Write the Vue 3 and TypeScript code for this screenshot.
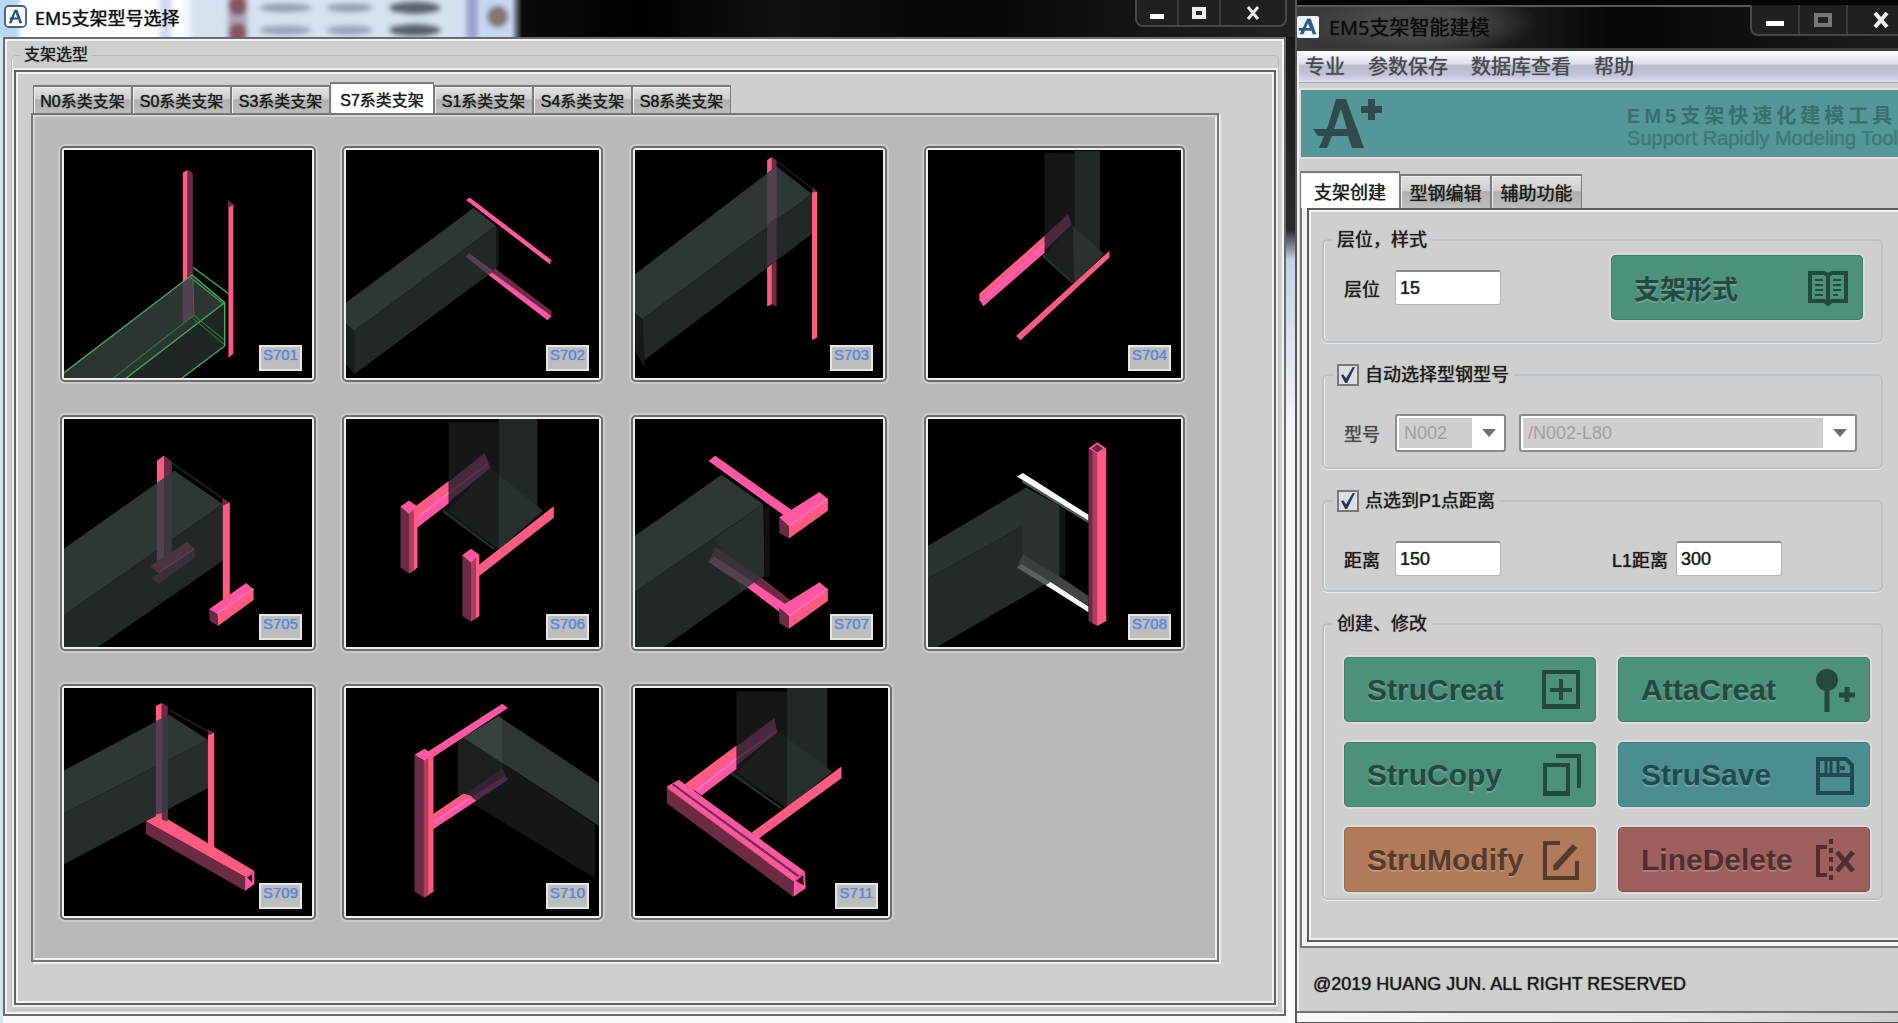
<script setup lang="ts">
import { ref } from 'vue'

type Face = [points: string, fill: string]
type Line = [points: string, stroke: string, width: number]

interface Scene {
  id: string
  box: string
  wide: boolean
  faces: Face[]
  lines?: Line[]
}

const P = '#ff5a80'
const M = '#ff58a0'
const R = '#b03d60'
const D = '#6b2b45'
const TOP = '#2f3735'
const SIDE = '#222827'
const DIM = '#141716'
const GHOST = '#54404f'

const scenes: Scene[] = [
  {
    id: 'S701', box: '67 58 668 683', wide: false,
    faces: [
      ['387,126 400,117 400,455 387,455', P], ['400,117 414,127 414,430 400,450', D],
      ['67,725 412,432 500,515 235,741 67,741', '#2d3533'],
      ['235,741 500,515 500,645 385,741', '#1f2524'],
      ['387,455 414,432 414,560 387,578', GHOST],
      ['510,218 523,222 523,668 510,680', P], ['508,206 523,222 510,230', D]
    ],
    lines: [
      ['67,725 412,432 500,515 235,741', '#45a852', 4], ['415,410 510,488', '#45a852', 4],
      ['408,440 500,522', '#45a852', 3], ['414,440 417,553 500,628', '#31783b', 3],
      ['417,553 200,741', '#31783b', 3], ['417,565 500,642', '#31783b', 3],
      ['500,515 500,645 385,741', '#45a852', 4]
    ]
  },
  {
    id: 'S702', box: '828 58 683 683', wide: true,
    faces: [
      ['828,515 1172,232 1233,285 850,600 828,580', TOP],
      ['850,600 1233,285 1233,415 850,730', SIDE], ['828,580 850,600 850,730 828,700', '#181c1b'],
      ['1233,290 1241,290 1241,405 1233,415', DIM],
      ['1152,378 1160,366 1225,420 1212,432', GHOST],
      ['1230,412 1383,540 1383,555 1222,424', D],
      ['1212,432 1222,424 1383,555 1372,568', M],
      ['1152,208 1162,200 1383,388 1378,400', M], ['1378,392 1383,388 1383,404', D]
    ]
  },
  {
    id: 'S703', box: '62 58 625 683', wide: false,
    faces: [
      ['395,88 407,79 407,520 395,527', P], ['407,79 419,90 419,527 407,520', D],
      ['62,430 418,107 508,190 80,565 62,548', TOP],
      ['80,565 508,190 508,310 85,688', SIDE], ['62,548 80,565 88,712 62,660', '#161a19'],
      ['395,132 419,108 419,260 395,283', GHOST], ['395,283 419,260 419,388 395,408', '#403542'],
      ['508,180 521,182 521,620 508,628', P], ['510,168 521,182 508,186', D]
    ],
    lines: [['419,92 512,176', '#242424', 3]]
  },
  {
    id: 'S704', box: '802 58 640 683', wide: true,
    faces: [
      ['1097,68 1172,68 1172,455 1092,372 1097,366', DIM], ['1172,60 1237,60 1237,370 1172,455', '#222827'],
      ['1097,375 1165,280 1172,290 1172,458', '#1b201f'], ['1168,284 1248,370 1172,458', '#2a312f'],
      ['1097,315 1156,250 1165,282 1097,360', '#49293b'],
      ['932,488 1097,315 1097,340 932,512', P], ['932,506 1097,335 1097,366 942,526', M],
      ['1025,615 1261,360 1261,380 1036,628', P]
    ],
    lines: [['936,512 1097,345', '#ff7bb8', 2], ['1092,374 1168,456', '#25312e', 6]]
  },
  {
    id: 'S705', box: '68 50 667 683', wide: false,
    faces: [
      ['318,175 337,159 337,245 318,245', P], ['337,159 358,178 358,245 337,245', D],
      ['68,438 365,205 495,305 68,638', TOP],
      ['68,638 495,305 495,475 160,733 68,733', SIDE],
      ['318,242 337,227 337,480 318,490', GHOST], ['337,227 358,212 358,480 337,480', '#3d3740'],
      ['300,490 400,418 420,440 322,512', '#49343f'], ['322,512 420,440 420,465 322,545 302,525', '#39303a'],
      ['458,620 558,541 578,560 480,634', M], ['480,634 578,560 578,592 482,670', P],
      ['458,620 480,634 482,670 460,655', D],
      ['495,300 514,300 514,592 495,608', P], ['493,286 514,300 495,310', D]
    ],
    lines: [['358,182 492,285', '#171a19', 8], ['480,633 578,559', '#ff7bea', 3], ['322,511 418,440', '#66566a', 2]]
  },
  {
    id: 'S706', box: '828 50 683 683', wide: true,
    faces: [
      ['1105,60 1240,60 1240,442 1090,325 1105,312', DIM], ['1240,50 1345,50 1345,320 1240,442', '#222827'],
      ['1105,325 1215,192 1240,215 1240,442', '#1a1f1e'], ['1240,215 1360,325 1240,442', '#28302e'],
      ['1105,238 1202,152 1218,196 1105,300', '#48293b'],
      ['1015,312 1105,236 1105,272 1015,350', P], ['1018,345 1105,268 1105,303 1020,376', M],
      ['975,312 998,328 998,513 975,495', D], ['998,328 1010,322 1010,505 998,513', R],
      ['1010,320 1021,312 1021,495 1010,505', P], ['975,312 998,294 1021,312 998,334', M],
      ['1185,488 1389,311 1389,346 1188,520', P],
      ['1142,458 1165,474 1165,657 1142,640', D], ['1165,474 1178,466 1178,648 1165,657', R],
      ['1178,464 1188,457 1188,640 1178,648', P], ['1142,458 1165,439 1188,457 1165,480', M]
    ],
    lines: [['1025,342 1105,272', '#ff7bea', 3], ['1105,272 1210,185', '#5d3852', 3], ['1090,326 1230,441', '#25312e', 6]]
  },
  {
    id: 'S707', box: '62 50 625 683', wide: false,
    faces: [
      ['62,400 280,217 385,305 62,568', TOP], ['62,568 385,305 388,520 135,733 62,733', SIDE],
      ['265,408 385,305 388,520 330,565', '#28302e'], ['388,308 402,315 402,520 388,525', '#0f1211'],
      ['247,478 265,433 385,530 345,555', '#3b3239'], ['247,478 262,462 362,540 345,555', GHOST],
      ['362,540 382,526 457,596 440,612', D], ['345,555 362,540 440,604 428,630', M],
      ['247,176 264,160 460,325 442,343', M],
      ['425,345 527,269 548,290 450,372', M], ['450,372 548,290 548,325 450,408', P], ['425,345 450,372 450,408 426,392', D],
      ['425,615 527,539 548,560 450,642', M], ['450,642 548,560 548,595 450,678', P], ['425,615 450,642 450,678 426,662', D]
    ],
    lines: [['450,371 548,289', '#ff7bea', 3], ['450,641 548,559', '#ff7bea', 3]]
  },
  {
    id: 'S708', box: '802 50 640 683', wide: true,
    faces: [
      ['802,430 1050,255 1135,310 802,528', '#2b3331'], ['802,528 1135,310 1135,520 825,733 802,733', '#242a29'],
      ['1040,262 1135,312 1135,520 1040,470', '#2b3230'], ['1135,312 1150,320 1150,520 1135,520', '#111413'],
      ['1027,495 1042,456 1135,522 1100,548', '#3a403f'], ['1027,495 1040,485 1112,538 1100,548', '#59605f'],
      ['1112,538 1135,522 1208,580 1208,610', '#434343'], ['1100,548 1112,538 1208,612 1208,629', '#f8f8f8'],
      ['1040,232 1208,352 1208,362 1040,240', '#555'],
      ['1027,222 1042,212 1208,337 1208,354', '#f8f8f8'],
      ['1208,138 1230,152 1230,670 1208,655', D], ['1218,146 1232,152 1232,670 1218,662', R],
      ['1230,152 1253,138 1253,655 1230,670', P], ['1208,138 1230,120 1253,138 1230,153', M],
      ['1216,138 1230,126 1245,138 1230,150', D]
    ]
  },
  {
    id: 'S709', box: '68 50 667 683', wide: false,
    faces: [
      ['315,104 331,95 331,450 315,450', P], ['331,95 347,105 347,450 331,450', D],
      ['68,297 350,130 455,205 68,425', TOP], ['68,425 455,205 455,350 68,578', '#262d2c'],
      ['315,150 333,140 333,425 315,435', GHOST], ['333,140 347,132 347,415 333,425', '#3c383f'],
      ['288,449 325,428 580,598 555,616', P], ['288,449 555,616 555,657 288,487', D],
      ['555,616 580,598 580,637 555,657', M], ['560,618 574,608 574,632', '#2a0d18'],
      ['315,430 331,425 331,447 315,452', P], ['331,425 347,412 347,450 331,445', D],
      ['455,188 472,184 472,530 455,543', P], ['455,175 472,184 455,192', D]
    ],
    lines: [['350,115 455,180', '#171a19', 6]]
  },
  {
    id: 'S710', box: '828 50 683 683', wide: true,
    faces: [
      ['1130,205 1145,198 1500,458 1500,620 1130,370', DIM],
      ['1130,205 1145,198 1250,275 1250,310 1150,375 1130,370', '#1b201e'],
      ['1145,198 1240,135 1510,333 1510,463', TOP], ['1145,198 1240,135 1250,142 1250,275', '#37413e'],
      ['1150,370 1250,290 1265,325 1178,389', '#36212f'], ['1165,378 1255,314 1265,325 1178,389', '#4b2b46'],
      ['1062,428 1145,366 1168,374 1062,455', P], ['1062,450 1165,374 1180,388 1062,474', M],
      ['1050,240 1250,97 1265,110 1060,260', M],
      ['1013,250 1040,268 1040,678 1013,660', D], ['1038,268 1052,258 1052,670 1038,678', R],
      ['1050,260 1064,250 1064,660 1050,670', P], ['1013,250 1040,232 1064,250 1040,268', M]
    ],
    lines: [['1065,452 1160,382', '#ff7bea', 3]]
  },
  {
    id: 'S711', box: '54 50 566 683', wide: true,
    faces: [
      ['281,60 394,60 394,410 270,305 281,292', DIM], ['394,50 484,50 484,295 394,410', '#222827'],
      ['281,300 375,182 394,200 394,410', '#1a1f1e'], ['394,200 495,300 394,408', '#28302e'],
      ['281,225 366,140 372,185 281,282', '#48293b'],
      ['165,338 281,222 281,258 185,358', P], ['185,355 281,255 281,293 203,372', M],
      ['315,483 516,285 516,320 330,502', P],
      ['125,345 152,325 434,600 410,628', M], ['125,345 410,628 408,675 125,395', D],
      ['410,628 434,600 436,650 408,675', M], ['414,628 430,610 432,642', '#3a1222']
    ],
    lines: [
      ['192,355 281,262', '#ff7bea', 3], ['281,262 372,178', '#5d3852', 3],
      ['138,338 420,614', '#7d2b50', 6], ['127,348 410,628', P, 4], ['270,306 383,412', '#25312e', 6]
    ]
  }
]

const seriesTabs = ['N0系类支架', 'S0系类支架', 'S3系类支架', 'S7系类支架', 'S1系类支架', 'S4系类支架', 'S8系类支架']
const activeSeries = ref('S7系类支架')

const menu = ['专业', '参数保存', '数据库查看', '帮助']
const toolTabs = ['支架创建', '型钢编辑', '辅助功能']
const activeTool = ref('支架创建')

const level = ref('15')
const autoPick = ref(true)
const toPoint = ref(true)
const distance = ref('150')
const l1 = ref('300')

const actions = [
  { name: 'StruCreat', tone: 'green', icon: 'create' },
  { name: 'AttaCreat', tone: 'green', icon: 'attach' },
  { name: 'StruCopy', tone: 'green', icon: 'copy' },
  { name: 'StruSave', tone: 'blue', icon: 'save' },
  { name: 'StruModify', tone: 'orange', icon: 'modify' },
  { name: 'LineDelete', tone: 'red', icon: 'delete' }
]
</script>

<template>
  <div class="desktop">
    <section class="window picker">
      <header class="titlebar">
        <svg class="backdrop" viewBox="0 0 530 38" aria-hidden="true">
          <defs>
            <filter id="soft" x="-20%" y="-20%" width="140%" height="140%"><feGaussianBlur stdDeviation="3" /></filter>
          </defs>
          <g filter="url(#soft)">
            <rect x="-10" y="-10" width="28" height="60" fill="#b9d6f6" />
            <rect x="162" y="-10" width="12" height="60" fill="#d3d8f4" />
            <rect x="195" y="-10" width="270" height="60" fill="#d5e2ef" />
            <rect x="232" y="-10" width="20" height="60" fill="#aaa4b8" />
            <circle cx="242" cy="6" r="10" fill="#845660" /><circle cx="242" cy="34" r="10" fill="#845660" />
            <ellipse cx="291" cy="8" rx="27" ry="5" fill="#98a2b5" /><ellipse cx="291" cy="31" rx="27" ry="5" fill="#98a2b5" />
            <ellipse cx="357" cy="8" rx="24" ry="5" fill="#98a2b5" /><ellipse cx="357" cy="31" rx="24" ry="5" fill="#98a2b5" />
            <ellipse cx="424" cy="8" rx="27" ry="7" fill="#5c636e" /><ellipse cx="424" cy="31" rx="27" ry="7" fill="#5c636e" />
            <rect x="477" y="-10" width="12" height="60" fill="#99a4cc" />
            <rect x="493" y="-10" width="30" height="60" fill="#c5d5f4" />
            <circle cx="509" cy="17" r="11" fill="#857672" />
          </g>
        </svg>
        <svg class="app-icon" viewBox="0 0 24 24" aria-hidden="true">
          <rect x="1" y="1" width="22" height="22" rx="4" fill="#f4fafd" stroke="#4b6376" stroke-width="2" />
          <path d="M5 19 11 5h3l5 14h-3l-1-4H6v-2h8l-2-5-4 11z" fill="#2f5570" />
        </svg>
        <h1>EM5支架型号选择</h1>
        <div class="controls">
          <button aria-label="最小化"><svg width="16" height="14" viewBox="0 0 16 14"><path d="M1 8h14v5H1z" fill="#fff" /></svg></button>
          <button aria-label="最大化"><svg width="16" height="14" viewBox="0 0 16 14"><path d="M3 3h10v8H3z" fill="none" stroke="#eee" stroke-width="4" /></svg></button>
          <button class="close" aria-label="关闭"><svg width="16" height="14" viewBox="0 0 16 14"><path d="M3 1 13 13M13 1 3 13" stroke="#eee" stroke-width="3" /></svg></button>
        </div>
      </header>
      <div class="client">
        <fieldset class="outer-group">
          <legend>支架选型</legend>
          <div class="tab-frame">
            <div class="tabs" role="tablist">
              <button
                v-for="t in seriesTabs" :key="t" role="tab" :aria-selected="t === activeSeries"
                :class="{ active: t === activeSeries }" @click="activeSeries = t"
              >{{ t }}</button>
            </div>
            <div class="gallery" role="tabpanel">
              <button v-for="s in scenes" :key="s.id" class="tile" :class="{ wide: s.wide }">
                <svg :viewBox="s.box" preserveAspectRatio="none" aria-hidden="true">
                  <polygon v-for="(f, i) in s.faces" :key="i" :points="f[0]" :fill="f[1]" />
                  <polyline v-for="(l, i) in s.lines" :key="'l' + i" :points="l[0]" :stroke="l[1]" :stroke-width="l[2]" fill="none" />
                </svg>
                <span class="tag">{{ s.id }}</span>
              </button>
            </div>
          </div>
        </fieldset>
      </div>
    </section>

    <section class="window modeler">
      <header class="titlebar">
        <svg class="app-icon" viewBox="0 0 24 24" aria-hidden="true">
          <rect width="24" height="24" rx="2" fill="#eef6fb" />
          <path d="M3 20 11 3h4l6 17h-4l-1-4H2v-3h12l-2-5-5 12z" fill="#2f5c7c" />
        </svg>
        <h1>EM5支架智能建模</h1>
        <div class="controls">
          <button aria-label="最小化"><svg width="20" height="16" viewBox="0 0 20 16"><path d="M1 9h18v5H1z" fill="#fff" /></svg></button>
          <button aria-label="最大化" disabled><svg width="20" height="16" viewBox="0 0 20 16"><path d="M3 3h14v10H3z" fill="none" stroke="#777" stroke-width="4" /></svg></button>
          <button class="close" aria-label="关闭"><svg width="16" height="16" viewBox="0 0 16 16"><path d="M2 1 14 15M14 1 2 15" stroke="#eee" stroke-width="4" /></svg></button>
        </div>
      </header>
      <div class="client">
        <nav class="menu">
          <button v-for="m in menu" :key="m">{{ m }}</button>
        </nav>
        <div class="banner">
          <svg width="70" height="50" viewBox="0 0 70 50" aria-hidden="true">
            <path d="M23 0h10l18 49H39l-4-12H19l-5 12H6l5-12H5l-5-7h14zM28 10 21 30h13z" fill="#2e4b4d" />
            <path d="M55 0h7v7h7v7h-7v7h-7v-7h-7V7h7z" fill="#2e4b4d" />
          </svg>
          <div class="slogan">
            <p class="zh">EM5支架快速化建模工具</p>
            <p class="en">Support Rapidly Modeling Tool</p>
          </div>
        </div>
        <div class="tabs" role="tablist">
          <button
            v-for="t in toolTabs" :key="t" role="tab" :aria-selected="t === activeTool"
            :class="{ active: t === activeTool }" @click="activeTool = t"
          >{{ t }}</button>
        </div>
        <div class="work-frame">
          <div class="work">
            <fieldset class="group">
              <legend>层位，样式</legend>
              <div class="row style-row">
                <label for="level">层位</label>
                <input id="level" v-model="level" type="text" />
                <button class="action green">
                  <span class="zh-caption">支架形式</span>
                  <svg width="40" height="40" viewBox="0 0 40 40" fill="none" stroke="currentColor" stroke-width="4" aria-hidden="true">
                    <path d="M2 5h14l4 2 4-2h14v28H24l-4 3-4-3H2zM20 7v29" />
                    <path d="M7 12h8M7 17h8M7 22h8M7 27h8M25 12h8M25 17h8M25 22h8M25 27h5" stroke-width="2" />
                  </svg>
                </button>
              </div>
            </fieldset>

            <fieldset class="group">
              <legend><label class="check"><input v-model="autoPick" type="checkbox" />自动选择型钢型号</label></legend>
              <div class="row select-row">
                <label for="kind" class="muted">型号</label>
                <div class="combo small">
                  <select id="kind" disabled><option>N002</option></select>
                  <svg width="14" height="8" viewBox="0 0 14 8" aria-hidden="true"><path d="M0 0h14L7 8z" fill="#6e6e6e" /></svg>
                </div>
                <div class="combo large">
                  <select aria-label="规格" disabled><option>/N002-L80</option></select>
                  <svg width="14" height="8" viewBox="0 0 14 8" aria-hidden="true"><path d="M0 0h14L7 8z" fill="#6e6e6e" /></svg>
                </div>
              </div>
            </fieldset>

            <fieldset class="group">
              <legend><label class="check"><input v-model="toPoint" type="checkbox" />点选到P1点距离</label></legend>
              <div class="row distance-row">
                <label for="dist">距离</label>
                <input id="dist" v-model="distance" type="text" />
                <label for="l1" class="second">L1距离</label>
                <input id="l1" v-model="l1" type="text" />
              </div>
            </fieldset>

            <fieldset class="group">
              <legend>创建、修改</legend>
              <div class="actions">
                <button v-for="a in actions" :key="a.name" class="action" :class="a.tone">
                  <span>{{ a.name }}</span>
                  <svg width="40" height="44" viewBox="0 0 40 44" fill="none" stroke="currentColor" stroke-width="4" aria-hidden="true">
                    <template v-if="a.icon === 'create'">
                      <path d="M3 4h34v34H3zM1 39h38" /><path d="M20 11v21M9 22h22" />
                    </template>
                    <template v-else-if="a.icon === 'attach'">
                      <circle cx="12" cy="12" r="11" fill="currentColor" stroke="none" /><path d="M12 20v24" stroke-width="5" />
                      <path d="M32 19v15M24 27h16" stroke-width="5" />
                    </template>
                    <template v-else-if="a.icon === 'copy'">
                      <path d="M4 12h23v28H4zM15 3h23v32" /><path d="M2 41h27" />
                    </template>
                    <template v-else-if="a.icon === 'save'">
                      <path d="M3 6h28l6 6v28H3zM2 22h36" /><path d="M11 6v15M23 6v15M16 6v15" stroke-width="3" />
                      <path d="M25 15h5" /><path d="M1 40h38" />
                    </template>
                    <template v-else-if="a.icon === 'modify'">
                      <path d="M19 5H4v35h32V23" /><path d="M14 30 34 8" stroke-width="6" /><path d="M12 33l1-6 5 4z" fill="currentColor" stroke="none" />
                    </template>
                    <template v-else>
                      <path d="M12 9H3v28h9" /><path d="M16 1v43" stroke-dasharray="5 4" /><path d="M22 14 38 33M38 14 22 33" stroke-width="5" />
                    </template>
                  </svg>
                </button>
              </div>
            </fieldset>
          </div>
        </div>
        <footer>@2019 HUANG JUN. ALL RIGHT RESERVED</footer>
      </div>
      <div class="bottom-edge"></div>
    </section>
  </div>
</template>

<style>
body {
  margin: 0;
  background: #eef1f5;
}
</style>

<style scoped>
* {
  box-sizing: border-box;
}

.desktop {
  display: grid;
  grid-template-columns: 1297fr 601fr;
  min-height: 100vh;
  overflow: hidden;
  font-family: "Liberation Sans", "Noto Sans CJK SC", sans-serif;
  font-size: 18px;
  color: #1c1c1c;
}

button {
  font: inherit;
  color: inherit;
  padding: 0;
  border: 0;
  background: none;
}

.window {
  display: flex;
  flex-direction: column;
  min-width: 0;
}

.titlebar {
  position: relative;
  display: flex;
  align-items: center;
}

.titlebar h1 {
  margin: 0;
  font-family: "Open Sans", "Noto Sans CJK SC", sans-serif;
  font-weight: 400;
  white-space: nowrap;
  text-shadow: 0 0 1px currentColor;
}

.controls {
  display: flex;
  align-self: flex-start;
  margin-left: auto;
  border: 2px solid #48484a;
  border-top: 0;
  border-radius: 0 0 8px 8px;
  background: #202022;
}

.controls button {
  display: flex;
  align-items: center;
  justify-content: center;
  border-right: 2px solid #3c3c3e;
}

.controls .close {
  border-right: 0;
}

legend,
label,
.tabs button,
.menu button,
footer {
  text-shadow: 0 0 1px currentColor;
}

/* bracket picker */
.picker {
  padding: 0 9px 8px 3px;
  background: linear-gradient(90deg, #d5e4f4 3px, transparent 3px),
    linear-gradient(180deg, #161617 0, #2a2a2c 230px, #c4d3e4 260px, #f2f4f7 420px, #fafafa 100%);
  border-right: 2px solid #58585a;
}

.picker .titlebar {
  height: 37px;
  margin: 0 -9px 0 -3px;
  padding: 0 8px 4px 4px;
  background: linear-gradient(90deg, #fdfeff 0, #fdfeff 180px, #dfeaf5 200px, #d0def0 510px, #0a0a0b 522px, #000 640px, #111112 780px, #050505 960px, #222224 100%);
}

.backdrop {
  position: absolute;
  top: 0;
  left: 0;
  width: 520px;
  height: 37px;
}

.picker .app-icon {
  position: relative;
  width: 23px;
  height: 23px;
}

.picker h1 {
  position: relative;
  margin-left: 8px;
  font-size: 18px;
  color: #111;
}

.picker .controls {
  height: 27px;
}

.picker .controls button {
  width: 42px;
}

.picker .controls .close {
  width: 64px;
}

.picker .client {
  flex: 1;
  padding: 4px 5px 4px 6px;
  border: 2px solid #6a6a6c;
  box-shadow: inset 0 0 0 2px #f4f4f4;
  background: #cfcfcf;
}

.outer-group {
  min-width: 0;
  margin: 0;
  padding: 3px 2px 4px;
  border: 1px solid #b5bcc0;
  border-radius: 5px;
  box-shadow: inset 1px 0 0 #e6eaea;
}

.outer-group legend {
  margin-left: 6px;
  padding: 0 4px;
  font-size: 16px;
  line-height: 24px;
}

.tab-frame {
  padding: 10px 55px 41px 15px;
  border: 2px solid #616161;
  outline: 2px solid #f0f0f0;
  box-shadow: inset 0 0 0 2px #f4f4f4;
  background: #cfcfcf;
}

.tabs {
  display: flex;
  align-items: flex-end;
}

.tabs button {
  border: 2px solid #7b7b7b;
  border-left-width: 1px;
  border-right-width: 1px;
  border-bottom: 0;
  background: linear-gradient(180deg, #e2e2e2 0, #cfcfcf 45%, #b0b0b0 50%, #bdbdbd 100%);
  box-shadow: inset 1px 1px 0 #f0f0f0;
  white-space: nowrap;
}

.tabs button.active {
  background: #fff;
}

.picker .tabs {
  padding-left: 2px;
}

.picker .tabs button {
  width: 99px;
  height: 28px;
  font-size: 16px;
}

.picker .tabs button.active {
  width: 104px;
  height: 31px;
}

.gallery {
  display: grid;
  grid-template-columns: 282fr 289fr 293fr 293fr;
  row-gap: 33px;
  justify-items: start;
  padding: 31px 0 40px 27px;
  border: 2px solid #777;
  box-shadow: inset 2px 2px 0 #d6d6d6, inset -2px -2px 0 #f2f2f2, 2px 2px 0 #efefef;
  background: #b9b9b9;
}

.tile {
  position: relative;
  width: 256px;
  height: 236px;
  padding: 2px;
  border: 2px solid #6c6c6c;
  border-radius: 5px;
  background: #efefef;
  box-shadow: 0 0 0 2px #cbcbcb;
}

.tile.wide {
  width: 261px;
}

.tile svg {
  display: block;
  width: 100%;
  height: 100%;
  background: #000;
}

.tag {
  position: absolute;
  right: 12px;
  bottom: 9px;
  width: 43px;
  height: 26px;
  border: 2px solid #e9e6e0;
  background: #bebebe;
  font-size: 15px;
  line-height: 15px;
  text-align: center;
  color: #5c86dc;
  text-shadow: 0 0 1px currentColor;
}

/* modelling tool */
.modeler {
  background: #111;
}

.modeler .titlebar {
  height: 51px;
  border-top: 5px solid #050505;
  border-bottom: 3px solid #3a3a3c;
  box-shadow: inset 0 2px 0 #5a5a5c;
  background: radial-gradient(120px 34px at 120px 18px, #4c4c4c 40%, transparent 100%), linear-gradient(90deg, #3a3a3a 0, #161616 240px, #050505 320px, #1c1c1e 100%);
}

.modeler .app-icon {
  width: 22px;
  height: 22px;
}

.modeler h1 {
  margin-left: 10px;
  font-size: 20px;
  color: #0c0c0c;
}

.modeler .controls {
  height: 31px;
  margin-right: -18px;
}

.modeler .controls button {
  width: 48px;
}

.modeler .controls .close {
  width: 66px;
}

.modeler .client {
  flex: 1;
  display: flex;
  flex-direction: column;
  border-left: 2px solid #f0f0f0;
  background: #cfcfcf;
}

.menu {
  display: flex;
  align-items: center;
  gap: 23px;
  height: 32px;
  padding-left: 6px;
  border-bottom: 1px solid #a9a9b4;
  background: linear-gradient(180deg, #fff 0, #dfe0ea 40%, #b8bbcb 48%, #c2c4d6 75%, #dcdcf0 100%);
}

.menu button {
  font-size: 20px;
  line-height: 28px;
  color: #4a4a4e;
}

.banner {
  display: flex;
  align-items: center;
  justify-content: space-between;
  height: 67px;
  margin: 7px 0 14px 2px;
  padding: 0 0 0 12px;
  background: #559798;
  box-shadow: 0 0 0 2px #ead9d9;
}

.slogan {
  padding-top: 6px;
}

.slogan p {
  margin: 0;
  white-space: nowrap;
  line-height: 22px;
  font-size: 20px;
}

.slogan .zh {
  font-weight: 700;
  letter-spacing: 4px;
  color: #37706f;
}

.slogan .en {
  color: #3f7a7a;
  text-shadow: 0 0 1px currentColor;
}

.modeler .tabs {
  padding-left: 1px;
}

.modeler .tabs button {
  width: 91px;
  height: 34px;
  font-size: 18px;
}

.modeler .tabs button.active {
  width: 100px;
  height: 37px;
}

.work-frame {
  flex: 1;
  display: flex;
  flex-direction: column;
  margin-left: 1px;
  padding: 0 0 4px 5px;
  border-left: 2px solid #777;
  border-bottom: 2px solid #777;
  background: #f4f4f4;
}

.work {
  flex: 1;
  padding: 18px 15px 36px 13px;
  border: 2px solid #5d5d5d;
  border-right: 0;
  box-shadow: inset 2px 2px 0 #f2f2f2, inset 0 -2px 0 #f2f2f2;
  background: #cfcfcf;
}

.group {
  min-width: 0;
  margin: 0 0 20px;
  padding: 0;
  border: 2px solid #bcc3c7;
  border-radius: 6px;
  box-shadow: inset 1px 0 0 #e8ebeb, 0 1px 0 #e8ebeb;
}

.group:last-child {
  margin-bottom: 0;
}

.group legend {
  margin-left: 9px;
  padding: 0 5px 0 4px;
  line-height: 24px;
}

.check {
  display: flex;
  align-items: center;
  gap: 6px;
  height: 24px;
}

.check input {
  appearance: none;
  display: grid;
  place-items: center;
  width: 22px;
  height: 22px;
  margin: 0;
  border: 2px solid #777;
  background: #dedede;
}

.check input:checked::after {
  content: "";
  width: 14px;
  height: 16px;
  background: #2c3558;
  clip-path: polygon(0 52%, 16% 46%, 36% 70%, 84% 0, 100% 0, 44% 100%, 30% 100%);
}

.row {
  display: flex;
  align-items: center;
}

.row > label {
  margin-right: 15px;
  white-space: nowrap;
}

.row > .muted {
  color: #484848;
}

.row > input {
  width: 106px;
  height: 35px;
  padding: 0 4px;
  border: 1px solid #b2b5ba;
  border-top: 2px solid #8a8a8a;
  border-radius: 3px;
  background: #fff;
  font: inherit;
  color: #222;
  text-shadow: 0 0 1px currentColor;
}

.style-row {
  padding: 3px 18px 21px 20px;
}

.style-row .action {
  width: 252px;
  margin-left: auto;
}

.select-row {
  padding: 27px 24px 15px 20px;
}

.combo {
  display: flex;
  align-items: center;
  height: 38px;
  padding: 2px 8px 2px 2px;
  border: 2px solid #8b8b8b;
  border-radius: 3px;
  background: #fff;
}

.combo select {
  appearance: none;
  flex: 1;
  min-width: 0;
  height: 100%;
  margin-right: 10px;
  padding: 0 5px;
  border: 0;
  border-radius: 0;
  background: #cfcfcf;
  font: inherit;
  color: #a0a0a0;
  opacity: 1;
}

.combo.small {
  width: 111px;
  margin-right: 13px;
}

.combo.large {
  flex: 1;
}

.distance-row {
  padding: 28px 0 14px 20px;
}

.distance-row .second {
  margin-left: 111px;
  margin-right: 8px;
}

.actions {
  display: grid;
  grid-template-columns: 1fr 1fr;
  gap: 20px 22px;
  padding: 21px 11px 6px 20px;
}

.action {
  display: flex;
  align-items: center;
  justify-content: space-between;
  height: 65px;
  padding: 0 15px 0 23px;
  border-radius: 5px;
  font-size: 30px;
  font-weight: 700;
}

.action span {
  text-shadow: 0 2px 1px rgba(255, 255, 255, 0.2);
}

.action .zh-caption {
  font-size: 26px;
}

.green {
  background: #4b917b;
  box-shadow: inset 0 0 0 1px #3a846c, 0 0 0 2px #e2d6d6;
  color: #24493f;
}

.blue {
  background: #4a8e92;
  box-shadow: inset 0 0 0 1px #398488, 0 0 0 2px #e2d6d6;
  color: #214a4e;
}

.orange {
  background: #b07a5b;
  box-shadow: inset 0 0 0 1px #a66a46, 0 0 0 2px #d4e0e0;
  color: #573b29;
}

.red {
  background: #9e5f5f;
  box-shadow: inset 0 0 0 1px #914b4d, 0 0 0 2px #d4e0e0;
  color: #502d2f;
}

footer {
  padding: 24px 0 15px 14px;
  line-height: 24px;
  white-space: nowrap;
}

.bottom-edge {
  height: 13px;
  border-top: 2px solid #707070;
  border-bottom: 2px solid #555;
  background: linear-gradient(90deg, #f8f8f8, #e8e8e8 60%, #cfcfcf);
}
</style>
